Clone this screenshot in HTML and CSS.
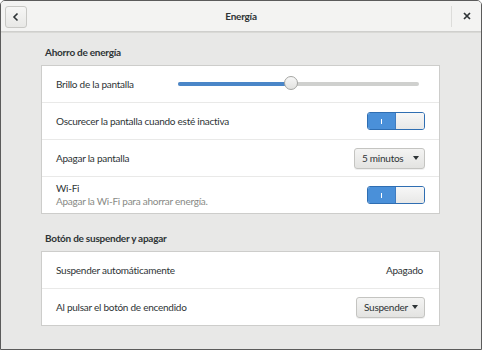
FILE: index.html
```html
<!DOCTYPE html>
<html lang="es">
<head>
<meta charset="utf-8">
<link rel="stylesheet" href="styles.css">
</head>
<body>
<div class="window">
  <header class="headerbar">
    <button class="back-btn" aria-label="Atrás">
      <svg width="10" height="10" viewBox="0 0 10 10"><path d="M6.5 1.5 L3 5 L6.5 8.5" fill="none" stroke="#2e3436" stroke-width="1.6"/></svg>
    </button>
    <div class="title">Energía</div>
    <div class="close-area">
      <svg width="8" height="8" viewBox="0 0 8 8"><path d="M1 1 L7 7 M7 1 L1 7" stroke="#2e3436" stroke-width="1.7"/></svg>
    </div>
  </header>
  <main class="content">
    <h2 class="section-title">Ahorro de energía</h2>
    <div class="card">
      <div class="row">
        <span class="label">Brillo de la pantalla</span>
        <div class="slider">
          <div class="slider-fill"></div>
          <div class="slider-knob"></div>
        </div>
      </div>
      <div class="row">
        <span class="label">Oscurecer la pantalla cuando esté inactiva</span>
        <div class="switch"><span class="switch-on"><i></i></span><span class="switch-off"></span></div>
      </div>
      <div class="row">
        <span class="label">Apagar la pantalla</span>
        <button class="combo combo-min">5 minutos <span class="arrow"></span></button>
      </div>
      <div class="row">
        <div class="label-stack">
          <span class="label">Wi-Fi</span>
          <span class="sublabel">Apagar la Wi-Fi para ahorrar energía.</span>
        </div>
        <div class="switch"><span class="switch-on"><i></i></span><span class="switch-off"></span></div>
      </div>
    </div>
    <h2 class="section-title second">Botón de suspender y apagar</h2>
    <div class="card">
      <div class="row">
        <span class="label">Suspender automáticamente</span>
        <span class="value">Apagado</span>
      </div>
      <div class="row">
        <span class="label">Al pulsar el botón de encendido</span>
        <button class="combo combo-susp">Suspender <span class="arrow"></span></button>
      </div>
    </div>
  </main>
</div>
</body>
</html>
```
FILE: styles.css
```css
* { box-sizing: border-box; }
html, body { margin: 0; padding: 0; }
body {
  width: 482px;
  height: 350px;
  overflow: hidden;
  font-family: "Lato", "Noto Sans", sans-serif;
  font-size: 10px;
  letter-spacing: -0.25px;
  color: #2e3436;
}
.window {
  width: 482px;
  height: 350px;
  border: 1px solid #5b5b5b;
  border-radius: 5px 5px 0 0;
  background: #e8e8e7;
  display: flex;
  flex-direction: column;
  overflow: hidden;
}
.headerbar {
  height: 31px;
  flex: none;
  background: #f3f3f2;
  border-bottom: 1px solid #cfcfcd;
  box-shadow: 0 1px 0 #d9d9d6;
  display: flex;
  align-items: center;
  position: relative;
  padding: 0 4px;
}
.back-btn {
  width: 22px;
  height: 22px;
  border: 1px solid #c8c8c5;
  border-radius: 3px;
  background: linear-gradient(#f6f6f5, #e8e8e6);
  display: flex;
  align-items: center;
  justify-content: center;
  padding: 0;
  margin-top: 1px;
}
.title {
  position: absolute;
  left: 0; right: 0;
  text-align: center;
  font-weight: 700;
  font-size: 10px;
  color: #2e3436;
  pointer-events: none;
}
.close-area {
  margin-left: auto;
  height: 21px;
  width: 30px;
  border-left: 1px solid #dcdcda;
  display: flex;
  align-items: center;
  justify-content: center;
  margin-right: -4px;
}
.content {
  padding: 13px 41px 0 40px;
}
.section-title {
  margin: 0 0 6px 4px;
  font-size: 10px;
  font-weight: 700;
  line-height: 14px;
}
.section-title.second { margin-top: 17px; }
.card {
  background: #fff;
  border: 1px solid #cdcdcb;
}
.row {
  height: 37px;
  display: flex;
  align-items: center;
  justify-content: space-between;
  padding: 0 14px 0 14px;
  border-top: 1px solid #e9e9e8;
}
.row:first-child { border-top: none; height: 36px; }
.label { line-height: 13px; white-space: nowrap; }
.label-stack { display: flex; flex-direction: column; }
.sublabel { color: #888a85; line-height: 13px; }
.slider {
  position: relative;
  width: 241px;
  height: 4px;
  background: #cfd0ce;
  border-radius: 2px;
  margin-right: 6px;
}
.slider-fill {
  width: 113px;
  height: 100%;
  background: #4a86c8;
  border-radius: 2px;
}
.slider-knob {
  position: absolute;
  left: 106px;
  top: -6px;
  width: 14px;
  height: 14px;
  border-radius: 50%;
  background: linear-gradient(#f7f7f7, #e2e2e0);
  border: 1px solid #a5a6a3;
}
.switch {
  width: 58px;
  height: 18px;
  border: 1px solid #2f6eb2;
  border-radius: 3px;
  display: flex;
  overflow: hidden;
}
.switch-on {
  width: 28px;
  background: #4a90d9;
  display: flex;
  align-items: center;
  justify-content: center;
  border-right: 1px solid #3f7cc0;
}
.switch-on i {
  display: block;
  width: 1px;
  height: 5px;
  background: #fff;
}
.switch-off {
  flex: 1;
  background: linear-gradient(#f7f7f7, #e8e8e7);
}
.combo {
  font-family: inherit;
  font-size: 10px;
  letter-spacing: -0.25px;
  white-space: nowrap;
  color: #2e3436;
  height: 21px;
  border: 1px solid #c4c4c1;
  border-radius: 3px;
  background: linear-gradient(#f4f4f3, #e3e3e1);
  box-shadow: 0 1px 0 rgba(0,0,0,0.06);
  display: flex;
  align-items: center;
  padding: 0 0 0 7px;
}
.combo-min { width: 71px; gap: 10px; }
.combo-susp { width: 69px; gap: 4px; }
.arrow {
  width: 0; height: 0;
  border-left: 3.5px solid transparent;
  border-right: 3.5px solid transparent;
  border-top: 4px solid #2e3436;
}
.value { margin-right: 2px; }
```
